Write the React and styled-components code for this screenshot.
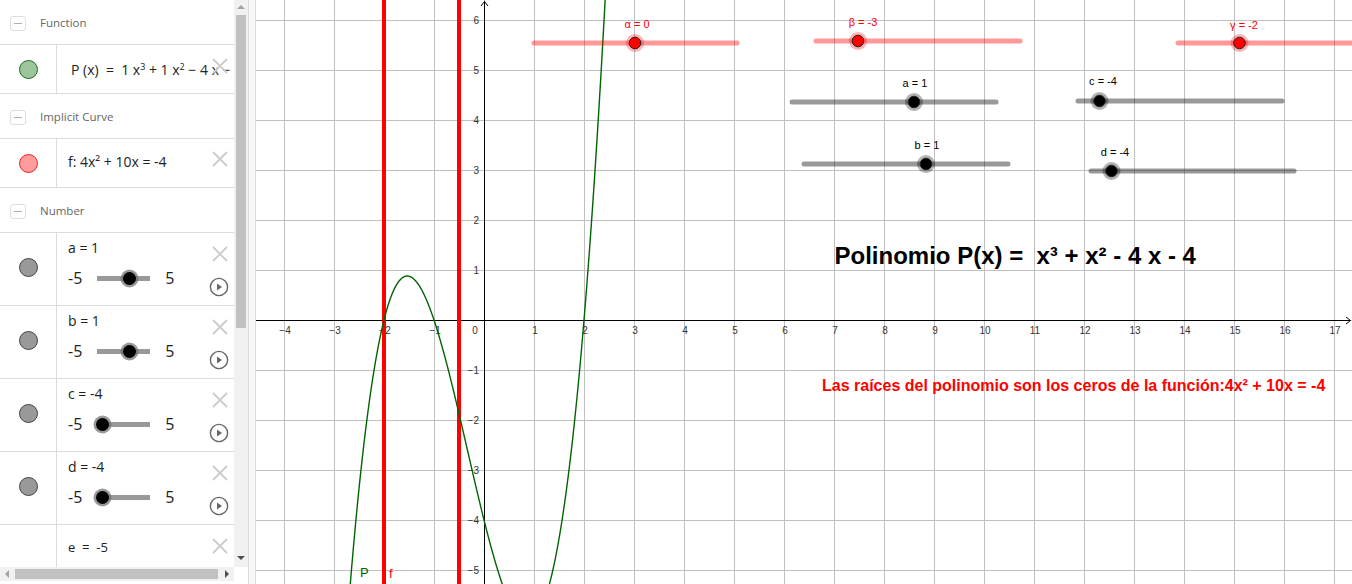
import React from "react";
import styled, { createGlobalStyle } from "styled-components";

const GlobalStyle = createGlobalStyle`
  html, body {
    margin: 0;
    padding: 0;
    background: #ffffff;
  }
  body {
    font-family: "Open Sans", "Liberation Sans", sans-serif;
  }
`;

// graph geometry (in graph pixels)
const GW = 1096;
const GH = 584;
const OX = 228;
const OY = 320;
const UNIT = 50;

const range = (a, b) => {
  const out = [];
  for (let i = a; i <= b; i++) out.push(i);
  return out;
};

const numLabel = (n) => (n < 0 ? "\u2212" + Math.abs(n) : String(n));

const curvePoints = () => {
  const pts = [];
  for (let x = -2.8; x <= 2.5; x += 0.005) {
    const y = x * x * x + x * x - 4 * x - 4;
    pts.push(`${(OX + UNIT * x).toFixed(2)},${(OY - UNIT * y).toFixed(2)}`);
  }
  return pts.join(" ");
};

const graphSliders = [
  { x1: 278, x2: 481, y: 43, px: 379, label: "\u03b1 = 0", lx: 381, ly: 28, red: true },
  { x1: 560, x2: 764, y: 41, px: 602, label: "\u03b2 = -3", lx: 607, ly: 26, red: true },
  { x1: 922, x2: 1130, y: 43, px: 983.5, label: "\u03b3 = -2", lx: 988, ly: 29, red: true },
  { x1: 536, x2: 740, y: 102, px: 658, label: "a = 1", lx: 659, ly: 87 },
  { x1: 822, x2: 1026, y: 101, px: 843.5, label: "c = -4", lx: 847, ly: 85 },
  { x1: 548, x2: 752, y: 164, px: 670, label: "b = 1", lx: 671, ly: 149 },
  { x1: 835, x2: 1038, y: 171, px: 855.5, label: "d = -4", lx: 859, ly: 156 },
];

const numbers = [
  { name: "a", value: 1 },
  { name: "b", value: 1 },
  { name: "c", value: -4 },
  { name: "d", value: -4 },
];

const CloseIcon = () => (
  <svg width="16" height="16" viewBox="0 0 16 16">
    <path d="M1 1 L15 15 M15 1 L1 15" stroke="#cccccc" strokeWidth="1.8" fill="none" />
  </svg>
);

const PlayIcon = () => (
  <svg width="20" height="20" viewBox="0 0 20 20">
    <circle cx="10" cy="10" r="8.6" stroke="#666666" strokeWidth="1.4" fill="none" />
    <path d="M8 6.6 L13 10 L8 13.4 Z" fill="#666666" />
  </svg>
);

const GraphSlider = ({ x1, x2, y, px, label, lx, ly, red }) => (
  <g>
    <line
      x1={x1}
      x2={x2}
      y1={y}
      y2={y}
      stroke={red ? "rgba(255,0,0,0.4)" : "rgba(0,0,0,0.4)"}
      strokeWidth="5"
      strokeLinecap="round"
    />
    <circle cx={px} cy={y} r="9" fill={red ? "rgba(255,0,0,0.3)" : "rgba(0,0,0,0.3)"} />
    <circle cx={px} cy={y} r="5.8" fill={red ? "#ff0000" : "#000000"} stroke="#222" strokeWidth="1" />
    <text
      x={lx}
      y={ly}
      textAnchor="middle"
      fill={red ? "#ff0000" : "#000000"}
      fontSize="11"
      fontFamily="'Liberation Sans', Arial, sans-serif"
    >
      {label}
    </text>
  </g>
);

const Graph = () => (
  <GraphArea>
    <svg width={GW} height={GH} viewBox={`0 0 ${GW} ${GH}`}>
      {range(-4, 17).map((k) => (
        <line key={"v" + k} x1={OX + UNIT * k + 0.5} x2={OX + UNIT * k + 0.5} y1="0" y2={GH} stroke="#c0c0c0" strokeWidth="1" />
      ))}
      {range(-5, 6).map((k) => (
        <line key={"h" + k} y1={OY - UNIT * k + 0.5} y2={OY - UNIT * k + 0.5} x1="0" x2={GW} stroke="#c0c0c0" strokeWidth="1" />
      ))}

      <line x1={OX + 0.5} x2={OX + 0.5} y1="1" y2={GH} stroke="#000" strokeWidth="1" />
      <line x1="0" x2={GW - 2} y1={OY + 0.5} y2={OY + 0.5} stroke="#000" strokeWidth="1" />
      <path d={`M${OX - 3} 6 L${OX + 0.5} 1.5 L${OX + 4} 6`} stroke="#000" fill="none" strokeWidth="1" />
      <path d={`M${GW - 6} ${OY - 3} L${GW - 1.5} ${OY + 0.5} L${GW - 6} ${OY + 4}`} stroke="#000" fill="none" strokeWidth="1" />

      <g fontFamily="'Liberation Sans', Arial, sans-serif" fontSize="10" fill="#333">
        {range(-4, 17)
          .filter((k) => k !== 0)
          .map((k) => (
            <text key={"xl" + k} x={OX + UNIT * k + 1} y={OY + 14} textAnchor="middle">
              {numLabel(k)}
            </text>
          ))}
        <text x={OX - 9} y={OY + 14} textAnchor="middle">0</text>
        {range(-5, 6)
          .filter((k) => k !== 0)
          .map((k) => (
            <text key={"yl" + k} x={OX - 5} y={OY - UNIT * k + 4} textAnchor="end">
              {numLabel(k)}
            </text>
          ))}
      </g>

      <line x1={OX - 2 * UNIT} x2={OX - 2 * UNIT} y1="0" y2={GH} stroke="#ff0000" strokeWidth="4" />
      <line x1={OX - 0.5 * UNIT} x2={OX - 0.5 * UNIT} y1="0" y2={GH} stroke="#ff0000" strokeWidth="4" />

      <polyline points={curvePoints()} fill="none" stroke="#006400" strokeWidth="1.4" />

      <text x="104" y="577" fill="#006400" fontSize="13" fontFamily="'Liberation Sans', Arial, sans-serif">P</text>
      <text x="133" y="578" fill="#ff0000" fontSize="13" fontFamily="'Liberation Sans', Arial, sans-serif">f</text>

      {graphSliders.map((s) => (
        <GraphSlider key={s.label} {...s} />
      ))}

      <text
        x="578.5"
        y="264"
        xmlSpace="preserve"
        fontFamily="'Liberation Sans', Arial, sans-serif"
        fontWeight="bold"
        fontSize="24"
        fill="#000"
      >
        {"Polinomio P(x) =  x\u00b3 + x\u00b2 - 4 x - 4"}
      </text>
      <text
        x="566"
        y="391"
        fontFamily="'Liberation Sans', Arial, sans-serif"
        fontWeight="bold"
        fontSize="16"
        fill="#ff0000"
      >
        {"Las ra\u00edces del polinomio son los ceros de la funci\u00f3n:4x\u00b2 + 10x = -4"}
      </text>
    </svg>
  </GraphArea>
);

const Slider = ({ value }) => (
  <SliderLine>
    <span>-5</span>
    <Track>
      <Knob style={{ left: `${((value + 5) / 10) * 53}px` }} />
    </Track>
    <span>5</span>
  </SliderLine>
);

const App = () => (
  <>
    <GlobalStyle />
    <Page>
      <Sidebar>
        <SideMain>
          <List>
            <SectionHeader>
              <CollapseBox />
              Function
            </SectionHeader>
            <Row $h={48}>
              <Marker>
                <Dot $fill="#9cc59c" $stroke="#1f6b1f" />
              </Marker>
              <ItemContent>
                <Formula $indent={3}>
                  P (x) &nbsp;= &nbsp;1 x<sup>3</sup> + 1 x<sup>2</sup> − 4 x − 4
                </Formula>
                <CloseSpot $top={13}>
                  <CloseIcon />
                </CloseSpot>
              </ItemContent>
            </Row>
            <SectionHeader>
              <CollapseBox />
              Implicit Curve
            </SectionHeader>
            <Row $h={48}>
              <Marker>
                <Dot $fill="#ff9c9c" $stroke="#ee2222" />
              </Marker>
              <ItemContent $lift={3}>
                <Formula>f: 4x² + 10x = -4</Formula>
                <CloseSpot $top={12}>
                  <CloseIcon />
                </CloseSpot>
              </ItemContent>
            </Row>
            <SectionHeader>
              <CollapseBox />
              Number
            </SectionHeader>
            {numbers.map((n) => (
              <Row key={n.name} $h={72}>
                <Marker $lift={4}>
                  <Dot $fill="#999999" $stroke="#444444" />
                </Marker>
                <SliderContent>
                  <VarLabel>
                    {n.name} = {n.value}
                  </VarLabel>
                  <Slider value={n.value} />
                  <CloseSpot $top={13}>
                    <CloseIcon />
                  </CloseSpot>
                  <PlaySpot>
                    <PlayIcon />
                  </PlaySpot>
                </SliderContent>
              </Row>
            ))}
            <Row $h={48}>
              <Marker />
              <ItemContent $lift={4}>
                <Formula $small>e &nbsp;= &nbsp;-5</Formula>
                <CloseSpot $top={13}>
                  <CloseIcon />
                </CloseSpot>
              </ItemContent>
            </Row>
          </List>
          <VScroll>
            <Arrow $dir="up" />
            <VThumb />
            <Fill />
            <Arrow $dir="down" />
          </VScroll>
        </SideMain>
        <HScrollRow>
          <HScroll>
            <Arrow $dir="left" />
            <HThumb />
            <Fill />
            <Arrow $dir="right" />
          </HScroll>
        </HScrollRow>
      </Sidebar>
      <Divider />
      <Graph />
    </Page>
  </>
);

const Page = styled.div`
  display: flex;
  width: 1352px;
  height: 584px;
  overflow: hidden;
  background: #ffffff;
`;

const Sidebar = styled.div`
  width: 248px;
  flex: none;
  display: flex;
  flex-direction: column;
`;

const SideMain = styled.div`
  display: flex;
  height: 567px;
  overflow: hidden;
`;

const List = styled.div`
  width: 234px;
  flex: none;
  overflow: hidden;
`;

const SectionHeader = styled.div`
  height: 44px;
  padding-left: 10px;
  display: flex;
  align-items: center;
  gap: 14px;
  border-bottom: 1px solid #dcdcdc;
  font-size: 11.5px;
  color: #666666;
`;

const CollapseBox = styled.span`
  width: 16px;
  height: 15px;
  margin-top: 3px;
  box-sizing: border-box;
  border: 1px solid #dedede;
  border-radius: 3px;
  display: flex;
  align-items: center;
  justify-content: center;
  &::after {
    content: "";
    width: 8px;
    height: 1px;
    background: #b0b0b0;
  }
`;

const Row = styled.div`
  display: flex;
  height: ${(p) => p.$h}px;
  border-bottom: 1px solid #dcdcdc;
`;

const Marker = styled.div`
  width: 57px;
  flex: none;
  box-sizing: border-box;
  border-right: 1px solid #dcdcdc;
  display: flex;
  align-items: center;
  justify-content: center;
  padding-bottom: ${(p) => p.$lift || 0}px;
`;

const Dot = styled.span`
  width: 19px;
  height: 19px;
  box-sizing: border-box;
  border-radius: 50%;
  background: ${(p) => p.$fill};
  border: 1px solid ${(p) => p.$stroke};
`;

const ItemContent = styled.div`
  flex: 1;
  position: relative;
  display: flex;
  align-items: center;
  padding-left: 11px;
  padding-bottom: ${(p) => p.$lift || 0}px;
  overflow: hidden;
  white-space: nowrap;
`;

const Formula = styled.span`
  font-size: ${(p) => (p.$small ? 13 : 14)}px;
  margin-left: ${(p) => p.$indent || 0}px;
  color: #222222;
  sup {
    font-size: 9px;
    vertical-align: 5px;
    line-height: 0;
  }
`;

const SliderContent = styled.div`
  flex: 1;
  position: relative;
  display: flex;
  flex-direction: column;
  padding: 5px 0 0 11px;
`;

const VarLabel = styled.div`
  height: 20px;
  line-height: 20px;
  font-size: 14px;
  color: #222222;
`;

const SliderLine = styled.div`
  display: flex;
  align-items: center;
  height: 20px;
  margin-top: 10px;
  font-size: 16px;
  color: #222222;
  gap: 15px;
`;

const Track = styled.div`
  position: relative;
  width: 53px;
  height: 5px;
  background: #999999;
`;

const Knob = styled.span`
  position: absolute;
  top: 50%;
  width: 13px;
  height: 13px;
  margin: -6.5px 0 0 -6.5px;
  border-radius: 50%;
  background: #000000;
  box-shadow: 0 0 0 2.5px rgba(110, 110, 110, 0.7);
`;

const CloseSpot = styled.div`
  position: absolute;
  right: 6px;
  top: ${(p) => p.$top}px;
  width: 16px;
  height: 16px;
  display: flex;
`;

const PlaySpot = styled.div`
  position: absolute;
  right: 5px;
  top: 44px;
  width: 20px;
  height: 20px;
  display: flex;
`;

const VScroll = styled.div`
  width: 14px;
  flex: none;
  background: #f1f1f1;
  display: flex;
  flex-direction: column;
  align-items: center;
  padding: 5px 0 7px;
  box-sizing: border-box;
`;

const VThumb = styled.div`
  width: 10px;
  height: 313px;
  margin-top: 6px;
  background: #c1c1c1;
`;

const Fill = styled.div`
  flex: 1;
`;

const arrowShape = {
  up: "border-left: 4px solid transparent; border-right: 4px solid transparent; border-bottom: 4px solid #a3a3a3;",
  down: "border-left: 4px solid transparent; border-right: 4px solid transparent; border-top: 4px solid #505050;",
  left: "border-top: 4px solid transparent; border-bottom: 4px solid transparent; border-right: 4px solid #a3a3a3;",
  right: "border-top: 4px solid transparent; border-bottom: 4px solid transparent; border-left: 4px solid #505050;",
};

const Arrow = styled.span`
  width: 0;
  height: 0;
  flex: none;
  ${(p) => arrowShape[p.$dir]}
`;

const HScrollRow = styled.div`
  height: 17px;
  display: flex;
`;

const HScroll = styled.div`
  width: 234px;
  height: 14px;
  background: #f1f1f1;
  display: flex;
  align-items: center;
  padding: 0 5px;
  box-sizing: border-box;
`;

const HThumb = styled.div`
  width: 203px;
  height: 10px;
  margin-left: 6px;
  background: #c1c1c1;
`;

const Divider = styled.div`
  width: 8px;
  flex: none;
  box-sizing: border-box;
  background: #f7f7f7;
  border-left: 1px solid #dcdcdc;
  border-right: 1px solid #dcdcdc;
`;

const GraphArea = styled.div`
  flex: 1;
  position: relative;
  background: #ffffff;
  overflow: hidden;
  svg {
    display: block;
  }
`;

export default App;
